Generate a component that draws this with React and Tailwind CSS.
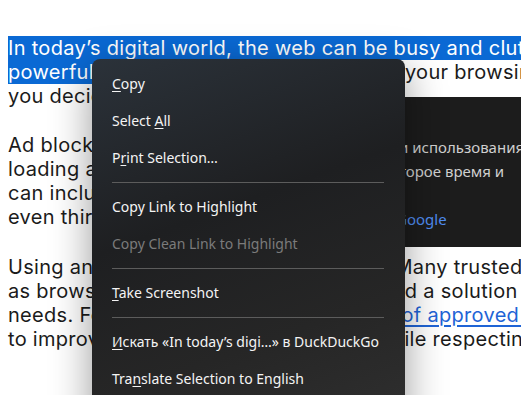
import React from "react";

const pageFont = { fontFamily: "Inter, 'Noto Sans', sans-serif" };
const menuFont = { fontFamily: "'Noto Sans', 'Open Sans', sans-serif" };

function U({ children }) {
  return <span className="underline underline-offset-2 decoration-1">{children}</span>;
}

function Item({ children, disabled }) {
  return (
    <div
      className={
        "h-[37px] flex items-center pl-[20px] text-[14px] " +
        (disabled ? "text-[#7b7b7b]" : "text-[#f4f4f4]")
      }
    >
      <span>{children}</span>
    </div>
  );
}

function Sep() {
  return (
    <div className="h-[12px] flex items-center pl-[20px] pr-[21px]">
      <div className="h-px w-full bg-[#5c5c5c]" />
    </div>
  );
}

export default function App() {
  return (
    <div className="relative w-[521px] h-[395px] overflow-hidden bg-white">
      <div
        className="pt-[36px] pl-[8px] w-[900px] text-[20px] leading-[24px] tracking-[0.3px] text-[#1b1b1b] whitespace-nowrap"
        style={pageFont}
      >
        <div className="mb-[25px]">
          <div>
            <span className="inline-block bg-[#0a69d4] text-white">
              In today’s digital world, the web can be busy and cluttered. Ad blockers are
            </span>
          </div>
          <div>
            <span className="inline-block bg-[#0a69d4] text-white">powerful tools that help clean</span>
            <span>, speed up your browsing experience and let</span>
          </div>
          <div>you decide what you want to see.</div>
        </div>
        <div className="mb-[26px]">
          <div>Ad blockers work by preventing ads and trackers from</div>
          <div>loading as you browse. These unwanted elements</div>
          <div>can include pop-ups, banners, autoplay videos and</div>
          <div>even third-party scripts that follow you around.</div>
        </div>
        <div>
          <div>Using an ad blocker is simple and safe. Many trusted ad blockers</div>
          <div>as browser addons, so you can easily find a solution that fits</div>
          <div>
            needs. For more information see our{" "}
            <a className="text-[#1f64d6] underline underline-offset-[3px]">list of approved add-ons</a>
          </div>
          <div>to improve your security and speeds, while respecting the sites you</div>
        </div>
      </div>

      {/* dark consent box behind the menu */}
      <div
        className="absolute left-[200px] top-[97px] w-[400px] h-[150px] bg-[#1c1c1c] text-[15px] leading-[24px] text-[#cfcfcf] pt-[38px]"
        style={menuFont}
      >
        <div className="pl-[199px]">и использования данных</div>
        <div className="pl-[199px]">торое время и</div>
        <div>&nbsp;</div>
        <div className="pl-[196px] text-[#4f8cf0]">Google</div>
      </div>

      {/* context menu */}
      <div
        className="absolute left-[92px] top-[59px] w-[313px] h-[380px] rounded-[8px] pt-[6px] bg-[linear-gradient(160deg,#2b323a_0%,#1e1f21_40%,#262626_70%,#303030_100%)] shadow-[0_10px_40px_rgba(0,0,0,0.4)]"
        style={menuFont}
      >
        <Item><U>C</U>opy</Item>
        <Item>Select <U>A</U>ll</Item>
        <Item>P<U>r</U>int Selection…</Item>
        <Sep />
        <Item>Copy Link to Highlight</Item>
        <Item disabled>Copy Clean Link to Highlight</Item>
        <Sep />
        <Item><U>T</U>ake Screenshot</Item>
        <Sep />
        <Item><U>И</U>скать «In today’s digi…» в DuckDuckGo</Item>
        <Item>Tra<U>n</U>slate Selection to English</Item>
      </div>
    </div>
  );
}
